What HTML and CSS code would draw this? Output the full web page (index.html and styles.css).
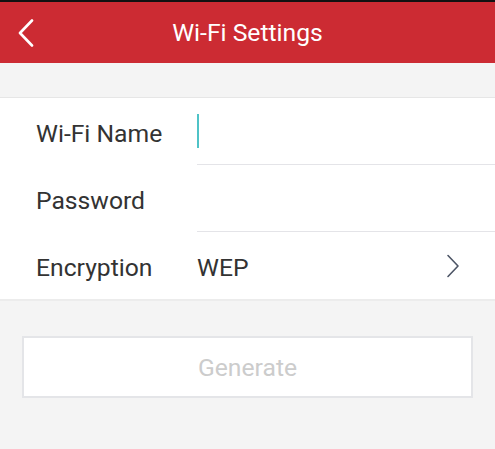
FILE: index.html
```html
<!DOCTYPE html>
<html lang="en">
<head>
    <meta charset="UTF-8">
    <meta name="viewport" content="width=device-width, initial-scale=1.0">
    <title>Wi-Fi Settings</title>
    <link rel="stylesheet" href="styles.css">
</head>
<body>
    <div class="status-line"></div>
    <header class="top-bar">
        <button class="back-btn" aria-label="Back">
            <svg width="16" height="28" viewBox="0 0 16 28">
                <polyline points="14,1.5 2,14 14,26.5" fill="none" stroke="#fff" stroke-width="2.6" stroke-linecap="round" stroke-linejoin="round"/>
            </svg>
        </button>
        <h1 class="title">Wi-Fi Settings</h1>
    </header>

    <div class="spacer"></div>

    <div class="form-list">
        <div class="form-row">
            <span class="label">Wi-Fi Name</span>
            <div class="value divided"><span class="cursor"></span></div>
        </div>
        <div class="form-row">
            <span class="label">Password</span>
            <div class="value divided"></div>
        </div>
        <div class="form-row">
            <span class="label">Encryption</span>
            <div class="value">
                <span class="value-text">WEP</span>
                <svg class="chevron" width="14" height="24" viewBox="0 0 14 24">
                    <polyline points="2,1.5 12,12 2,22.5" fill="none" stroke="#4d5566" stroke-width="1.6" stroke-linecap="round" stroke-linejoin="round"/>
                </svg>
            </div>
        </div>
    </div>

    <div class="actions">
        <button class="generate-btn" disabled>Generate</button>
    </div>
</body>
</html>
```

FILE: styles.css
```css
body {
    margin: 0;
    padding: 0;
    background: #f4f4f4;
    font-family: Roboto, "Noto Sans", Arial, sans-serif;
    color: #333;
    height: 100vh;
    overflow: hidden;
}

.status-line {
    height: 2px;
    background: #111;
}

.top-bar {
    position: relative;
    height: 61px;
    background: #cc2b33;
    display: flex;
    align-items: center;
    justify-content: center;
}

.back-btn {
    position: absolute;
    left: 18px;
    top: 17px;
    padding: 0;
    border: none;
    background: none;
    display: flex;
}

.title {
    margin: 0;
    color: #fff;
    font-size: 24.7px;
    font-weight: normal;
}

.spacer {
    height: 34px;
    border-bottom: 1px solid #e6e6e6;
}

.form-list {
    background: #fff;
    border-bottom: 2px solid #ececec;
}

.form-row {
    display: grid;
    grid-template-columns: 197px 1fr;
    height: 67px;
}

.label {
    padding-left: 36px;
    padding-top: 3px;
    font-size: 24.7px;
    align-self: center;
}

.value {
    display: flex;
    align-items: center;
    justify-content: space-between;
    font-size: 24.7px;
    padding-right: 35px;
}

.value-text {
    padding-top: 3px;
}

.value.divided {
    border-bottom: 1px solid #e4e4e8;
}

.cursor {
    width: 2px;
    height: 34px;
    background: #4fc3c7;
}

.chevron {
    display: block;
}

.actions {
    padding: 35px 22px 0 22px;
}

.generate-btn {
    width: 100%;
    height: 62px;
    padding-top: 2px;
    background: #fff;
    border: 2px solid #e4e5e8;
    color: #cccccc;
    font-family: Roboto, "Noto Sans", Arial, sans-serif;
    font-size: 24.7px;
}
```
